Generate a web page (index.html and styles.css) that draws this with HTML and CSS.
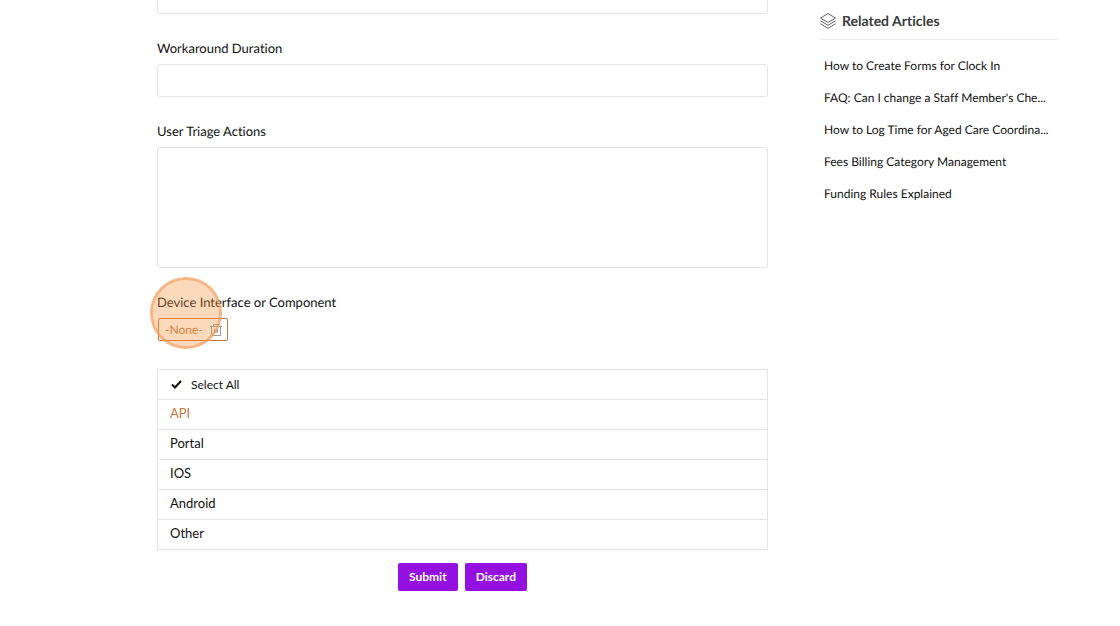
FILE: index.html
```
<!DOCTYPE html>
<html lang="en">
<head>
    <meta charset="UTF-8">
    <meta name="viewport" content="width=device-width, initial-scale=1.0">
    <title>Submit a ticket</title>
    <link rel="stylesheet" href="styles.css">
</head>
<body>
    <div class="page">
        <form class="ticket-form">
            <div class="field field-first">
                <input type="text" class="text-input" aria-label="Workaround">
            </div>

            <div class="field">
                <label for="duration">Workaround Duration</label>
                <input type="text" id="duration" class="text-input">
            </div>

            <div class="field">
                <label for="triage">User Triage Actions</label>
                <textarea id="triage" class="text-area"></textarea>
            </div>

            <div class="field">
                <div class="field-title" id="componentTitle">Device Interface or Component</div>
                <div class="tag">
                    <span>-None-</span>
                    <button type="button" class="tag-remove" aria-label="Remove">
                        <svg width="12" height="14" viewBox="0 0 12 14" fill="none" stroke="currentColor">
                            <path d="M0 3.5h12M3.5 3.5v-2h5v2M1.5 3.5v9h9v-9M4.5 6v4M6 6v4M7.5 6v4"/>
                        </svg>
                    </button>
                </div>
                <span class="click-marker"></span>
            </div>

            <ul class="options" aria-labelledby="componentTitle">
                <li>
                    <button type="button" class="option select-all">
                        <svg width="11" height="9" viewBox="0 0 11 9" fill="none" stroke="currentColor" stroke-width="2">
                            <path d="M1 4.5l3 3L10 1"/>
                        </svg>
                        Select All
                    </button>
                </li>
                <li><button type="button" class="option active">API</button></li>
                <li><button type="button" class="option">Portal</button></li>
                <li><button type="button" class="option">IOS</button></li>
                <li><button type="button" class="option">Android</button></li>
                <li><button type="button" class="option">Other</button></li>
            </ul>

            <div class="actions">
                <button type="submit" class="btn">Submit</button>
                <button type="reset" class="btn">Discard</button>
            </div>
        </form>

        <aside class="related">
            <h2>
                <svg width="16" height="16" viewBox="0 0 16 16" fill="none" stroke="currentColor" stroke-width="0.8" stroke-linejoin="round">
                    <path d="M8 0.5L15.5 5 8 9.5 0.5 5z"/>
                    <path d="M0.5 7.8L8 12.3l7.5-4.5M0.5 10.8L8 15.3l7.5-4.5"/>
                </svg>
                Related Articles
            </h2>
            <ul>
                <li><a href="#">How to Create Forms for Clock In</a></li>
                <li><a href="#">FAQ: Can I change a Staff Member's Che...</a></li>
                <li><a href="#">How to Log Time for Aged Care Coordina...</a></li>
                <li><a href="#">Fees Billing Category Management</a></li>
                <li><a href="#">Funding Rules Explained</a></li>
            </ul>
        </aside>
    </div>
</body>
</html>
```
FILE: styles.css
```
* {
    box-sizing: border-box;
}

body {
    margin: 0;
    background-color: #fff;
    color: #111;
    font-family: Lato, "Liberation Sans", sans-serif;
    font-size: 13px;
    font-variant-ligatures: none;
    text-rendering: geometricPrecision;
    line-height: 20px;
}

button,
input,
textarea {
    font: inherit;
    color: inherit;
}

ul {
    list-style: none;
    margin: 0;
    padding: 0;
}

.page {
    display: flex;
    align-items: flex-start;
    gap: 52px;
    padding: 0 62px 0 157px;
    overflow: hidden;
}

.ticket-form {
    flex: 1;
    min-width: 0;
}

.field {
    position: relative;
    margin-bottom: 24px;
}

/* first box is scrolled partly out of view */
.field-first {
    margin-top: -19px;
}

.field label,
.field-title {
    display: block;
    margin-bottom: 6px;
}

.text-input,
.text-area {
    display: block;
    width: 100%;
    height: 33px;
    padding: 6px 12px;
    border: 1px solid #e4e4e4;
    border-radius: 3px;
    background-color: #fff;
}

.text-area {
    height: 121px;
    resize: none;
}

.tag {
    display: inline-flex;
    align-items: center;
    gap: 7px;
    height: 23px;
    margin-left: 1px;
    padding: 0 5px 0 6px;
    border: 1px solid #c9763a;
    border-radius: 2px;
    color: #c9763a;
    font-size: 12px;
    vertical-align: top;
}

.tag-remove {
    display: flex;
    padding: 0;
    border: none;
    background: none;
    color: #999;
    cursor: pointer;
}

.click-marker {
    position: absolute;
    top: -15px;
    left: -7px;
    width: 72px;
    height: 72px;
    border: 3px solid rgba(243, 156, 90, 0.75);
    border-radius: 50%;
    background-color: rgba(250, 145, 62, 0.35);
    background-clip: padding-box;
    pointer-events: none;
}

.options {
    margin-top: 28px;
    border: 1px solid #e4e4e4;
}

.options li + li {
    border-top: 1px solid #e4e4e4;
}

.option {
    display: flex;
    align-items: center;
    width: 100%;
    height: 29px;
    padding: 0 12px 3px;
    border: none;
    background: none;
    text-align: left;
    cursor: pointer;
}

.option.active {
    color: #c9763a;
}

.select-all {
    gap: 9px;
    padding: 0 13px;
    font-size: 12px;
}

.actions {
    display: flex;
    justify-content: center;
    gap: 7px;
    margin-top: 13px;
}

.btn {
    height: 28px;
    padding: 0 11px;
    border: none;
    border-radius: 2px;
    background-color: #9410e0;
    color: #fff;
    font-size: 12px;
    font-weight: bold;
    cursor: pointer;
}

.related {
    flex: 0 0 238px;
    min-width: 0;
    padding-top: 11px;
}

.related h2 {
    display: flex;
    align-items: center;
    gap: 6px;
    margin: 0 0 16px;
    padding-bottom: 8px;
    border-bottom: 1px solid #ececec;
    color: #3a3a3a;
    font-size: 14px;
}

.related li {
    margin-bottom: 12px;
    padding-left: 4px;
    font-size: 12px;
    white-space: nowrap;
}

.related a {
    color: #111;
    text-decoration: none;
}
```
